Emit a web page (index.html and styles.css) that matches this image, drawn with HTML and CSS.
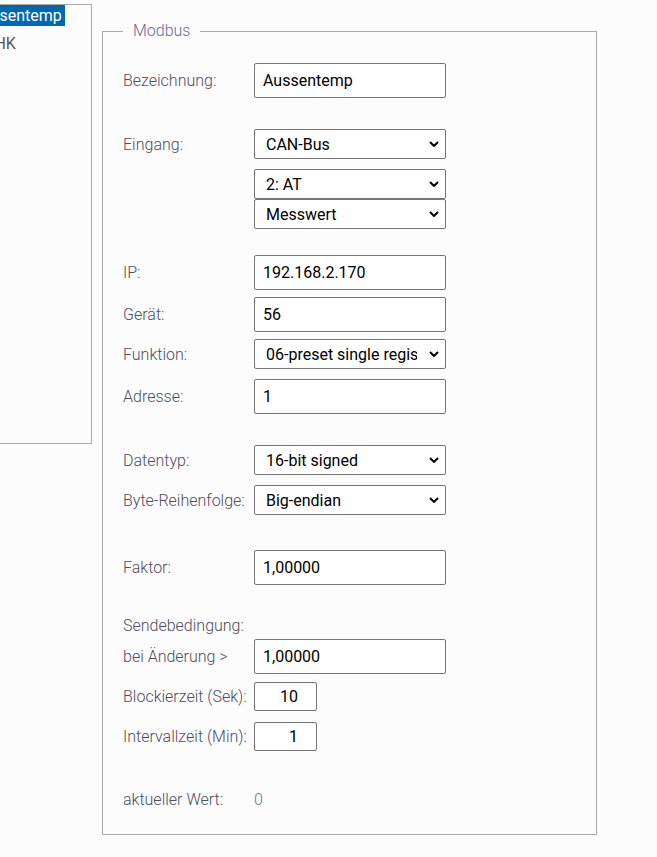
FILE: index.html
```html
<!DOCTYPE html>
<html lang="de">
<head>
<meta charset="utf-8">
<title>Modbus</title>
<link rel="stylesheet" href="styles.css">
</head>
<body>
<div class="page">
  <aside class="list">
    <div class="item selected">Aussentemp</div>
    <div class="item">RL HK</div>
  </aside>

  <fieldset class="panel">
    <legend>Modbus</legend>

    <div class="row">
      <label>Bezeichnung:</label>
      <input class="field" type="text" value="Aussentemp">
    </div>

    <div class="row sp31">
      <label>Eingang:</label>
      <div class="select"><select><option>CAN-Bus</option></select><svg class="chev" viewBox="0 0 10 6"><path d="M1 1l4 4 4-4"/></svg></div>
    </div>
    <div class="row sp10">
      <span></span>
      <div class="select"><select><option>2: AT</option></select><svg class="chev" viewBox="0 0 10 6"><path d="M1 1l4 4 4-4"/></svg></div>
    </div>
    <div class="row">
      <span></span>
      <div class="select"><select><option>Messwert</option></select><svg class="chev" viewBox="0 0 10 6"><path d="M1 1l4 4 4-4"/></svg></div>
    </div>

    <div class="row sp26">
      <label>IP:</label>
      <input class="field" type="text" value="192.168.2.170">
    </div>
    <div class="row sp7">
      <label>Gerät:</label>
      <input class="field" type="text" value="56">
    </div>
    <div class="row sp7">
      <label>Funktion:</label>
      <div class="select"><select><option>06-preset single register</option></select><svg class="chev" viewBox="0 0 10 6"><path d="M1 1l4 4 4-4"/></svg></div>
    </div>
    <div class="row sp10">
      <label>Adresse:</label>
      <input class="field" type="text" value="1">
    </div>

    <div class="row sp31">
      <label>Datentyp:</label>
      <div class="select"><select><option>16-bit signed</option></select><svg class="chev" viewBox="0 0 10 6"><path d="M1 1l4 4 4-4"/></svg></div>
    </div>
    <div class="row sp10">
      <label>Byte-Reihenfolge:</label>
      <div class="select"><select><option>Big-endian</option></select><svg class="chev" viewBox="0 0 10 6"><path d="M1 1l4 4 4-4"/></svg></div>
    </div>

    <div class="row sp35">
      <label>Faktor:</label>
      <input class="field" type="text" value="1,00000">
    </div>

    <div class="caption sp31">Sendebedingung:</div>
    <div class="row sp3">
      <label>bei Änderung &gt;</label>
      <input class="field" type="text" value="1,00000">
    </div>
    <div class="row sp8">
      <label>Blockierzeit (Sek):</label>
      <input class="field small" type="text" value="10">
    </div>
    <div class="row sp11">
      <label>Intervallzeit (Min):</label>
      <input class="field small" type="text" value="1">
    </div>

    <div class="row value sp39">
      <label>aktueller Wert:</label>
      <span class="current">0</span>
    </div>
  </fieldset>
</div>
</body>
</html>
```
FILE: styles.css
```css
html, body {
  margin: 0;
  padding: 0;
  background: #fcfcfc;
}

body {
  font-family: Roboto, "Liberation Sans", sans-serif;
  font-size: 16px;
  color: #555560;
}

.page {
  display: flex;
  align-items: flex-start;
}

.list {
  box-sizing: border-box;
  margin-top: 4px;
  margin-left: -60px;
  width: 152px;
  height: 440px;
  border: 1px solid #a9a9a9;
  padding-left: 28px;
}

.item {
  display: inline-block;
  line-height: 21px;
  padding: 0 3px;
  margin-bottom: 7px;
  color: #555560;
  white-space: nowrap;
}

.item.selected {
  background: #0067b1;
  color: #ffffff;
}

.panel {
  box-sizing: border-box;
  width: 495px;
  margin: 21px 0 0 10px;
  padding: 22px 20px 24px 20px;
  border: 1px solid #a9a9a9;
  min-width: 0;
}

.panel legend {
  margin-left: 0;
  padding: 0 10px;
  line-height: 20px;
  font-size: 16px;
  font-weight: 300;
  color: #6d6a8c;
}

.row {
  display: grid;
  grid-template-columns: 131px 192px;
  align-items: center;
}

.row label {
  font-weight: 300;
  color: #4f4d5e;
  white-space: nowrap;
}

.caption {
  font-weight: 300;
  color: #4f4d5e;
  line-height: 20px;
}

.field {
  box-sizing: border-box;
  width: 192px;
  height: 35px;
  margin: 0;
  padding: 0 8px;
  border: 1px solid #767676;
  border-radius: 2px;
  background: #ffffff;
  font-family: Roboto, "Liberation Sans", sans-serif;
  font-size: 16px;
  color: #000000;
  outline: none;
}

.field.small {
  width: 63px;
  height: 29px;
  text-align: right;
  padding-right: 18px;
}

.select {
  position: relative;
  width: 192px;
  height: 30px;
}

.select select {
  box-sizing: border-box;
  appearance: none;
  -webkit-appearance: none;
  width: 100%;
  height: 30px;
  margin: 0;
  padding: 0 28px 0 11px;
  border: 1px solid #767676;
  border-radius: 2px;
  background: #ffffff;
  font-family: Roboto, "Liberation Sans", sans-serif;
  font-size: 16px;
  color: #000000;
  outline: none;
}

.chev {
  position: absolute;
  right: 7px;
  top: 12px;
  width: 10px;
  height: 6px;
  pointer-events: none;
}

.chev path {
  fill: none;
  stroke: #000000;
  stroke-width: 2;
}

.value {
  line-height: 20px;
}

.current {
  color: #6b7592;
  font-weight: 300;
}

.sp3 { margin-top: 3px; }
.sp7 { margin-top: 7px; }
.sp8 { margin-top: 8px; }
.sp10 { margin-top: 10px; }
.sp11 { margin-top: 11px; }
.sp26 { margin-top: 26px; }
.sp31 { margin-top: 31px; }
.sp35 { margin-top: 35px; }
.sp39 { margin-top: 39px; }
```
